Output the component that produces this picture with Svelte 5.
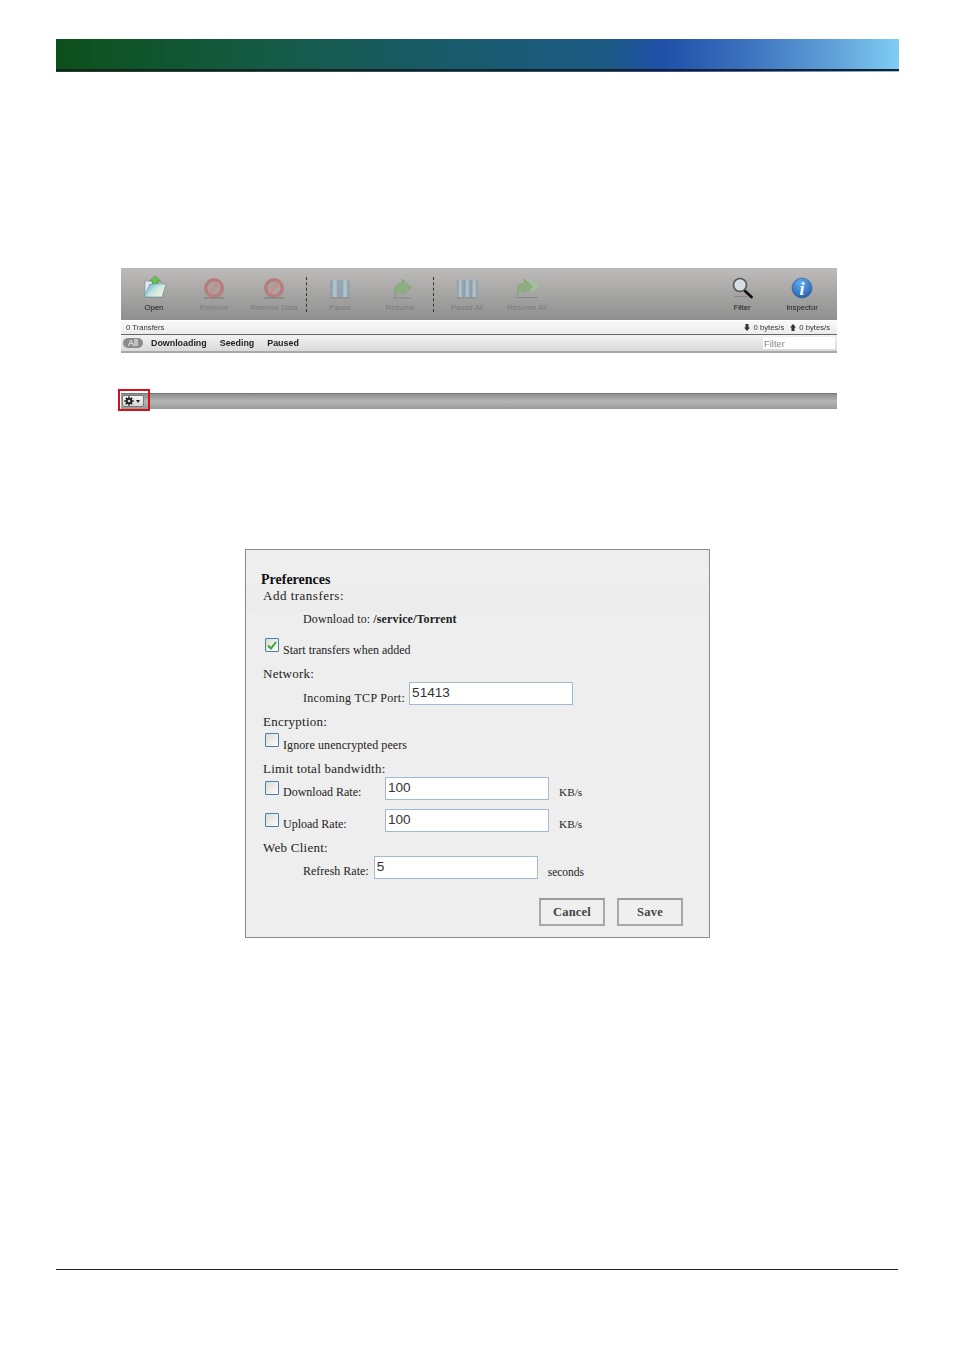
<script>
  const leftGroups = [
    [
      { label: 'Open', icon: 'open', on: true },
      { label: 'Remove', icon: 'remove' },
      { label: 'Remove Data', icon: 'remove' }
    ],
    [
      { label: 'Pause', icon: 'pause' },
      { label: 'Resume', icon: 'resume' }
    ],
    [
      { label: 'Pause All', icon: 'pauseall' },
      { label: 'Resume All', icon: 'resumeall' }
    ]
  ];
  const rightTools = [
    { label: 'Filter', icon: 'filter', on: true },
    { label: 'Inspector', icon: 'info', on: true }
  ];
</script>

{#snippet toolIcon(name)}
  <svg width="30" height="26" viewBox="0 0 30 26">
    <defs>
      <linearGradient id="fold" x1="0" y1="0" x2="1" y2="0.6">
        <stop offset="0" stop-color="#4aa3d8" />
        <stop offset="0.55" stop-color="#c4e4e0" />
        <stop offset="1" stop-color="#f4f6d6" />
      </linearGradient>
      <linearGradient id="bar" x1="0" y1="0" x2="1" y2="0">
        <stop offset="0" stop-color="#7f98aa" />
        <stop offset="0.5" stop-color="#b9c8cf" />
        <stop offset="1" stop-color="#8398a6" />
      </linearGradient>
      <radialGradient id="blue" cx="0.45" cy="0.25" r="0.85">
        <stop offset="0" stop-color="#66aeee" />
        <stop offset="1" stop-color="#1a58a6" />
      </radialGradient>
    </defs>
    {#if name === 'open'}
      <path d="M6 5h6l2 2h10v14H6z" fill="#e2e8ec" stroke="#7c8c96" stroke-width="0.6" />
      <path d="M16 0l5.500 5h-3v5h-5V5h-3z" fill="#63c44e" stroke="#3c8f34" stroke-width="0.5" />
      <path d="M11 8h16l-4 13H5z" fill="url(#fold)" stroke="#5f87a3" stroke-width="0.6" />
    {:else if name === 'remove'}
      <circle cx="15" cy="12" r="10" fill="#b97c7c" />
      <circle cx="15" cy="12" r="6.500" fill="#aca2a2" />
      <path d="M10 17l10-10" stroke="#c29292" stroke-width="3.400" />
      <rect x="5" y="21.500" width="20" height="1" fill="#777" />
    {:else if name === 'pause'}
      <rect x="5.500" y="4" width="8.700" height="17" fill="url(#bar)" />
      <rect x="15.700" y="4" width="8.700" height="17" fill="url(#bar)" />
      <rect x="5" y="21.500" width="20" height="1" fill="#888" />
    {:else if name === 'pauseall'}
      <rect x="5" y="4" width="6.500" height="17" fill="url(#bar)" />
      <rect x="12" y="4" width="6.500" height="17" fill="url(#bar)" />
      <rect x="19" y="4" width="6.500" height="17" fill="url(#bar)" />
      <rect x="5" y="21.500" width="20" height="1" fill="#888" />
    {:else if name === 'resume'}
      <path d="M17 3l9.500 8.500-9.500 7.500v-4c-4 0-6 2-7 6-2-8 1-14 7-14z" fill="#8dae80" stroke="#7b9c70" stroke-width="0.5" />
      <rect x="8" y="21.500" width="18" height="1" fill="#888" />
    {:else if name === 'resumeall'}
      <path d="M19 2l8 7.500-8 7.500v-4c-3 0-5 2-6 5-1-7 1-12 6-12z" fill="#a3c096" />
      <path d="M12 3l8.500 7.500-8.500 7.500v-4c-3.500 0-5.500 2-6.500 6-2-8 1-13 6.500-13z" fill="#8dae80" stroke="#7b9c70" stroke-width="0.5" />
      <rect x="4" y="21" width="22" height="1" fill="#888" />
    {:else if name === 'filter'}
      <rect x="7" y="20" width="14" height="1" fill="#888" />
      <path d="M18 15l6.500 6" stroke="#111" stroke-width="2.800" stroke-linecap="round" />
      <circle cx="13" cy="9" r="6.500" fill="#d3dfe5" stroke="#555" stroke-width="1.600" />
    {:else if name === 'info'}
      <circle cx="15" cy="12" r="10" fill="url(#blue)" stroke="#1c4f92" stroke-width="0.5" />
      <text class="info-i" x="15" y="18.500" text-anchor="middle">i</text>
    {/if}
  </svg>
{/snippet}

{#snippet toolButton(tool)}
  <div class="tool" class:on={tool.on}>
    <div class="tool-icon">{@render toolIcon(tool.icon)}</div>
    <span>{tool.label}</span>
  </div>
{/snippet}

<div class="page">
  <div class="banner"></div>

  <section class="webui">
    <div class="toolbar">
      {#each leftGroups as group, i}
        {#if i > 0}<div class="sep"></div>{/if}
        {#each group as tool}
          {@render toolButton(tool)}
        {/each}
      {/each}
      <div class="spring"></div>
      {#each rightTools as tool}
        {@render toolButton(tool)}
      {/each}
    </div>
    <div class="statusbar">
      <span>0 Transfers</span>
      <span class="speeds">
        <span class="speed"><svg width="6" height="7" viewBox="0 0 6 7"><path d="M1.500 0h3v3.500H6L3 7 0 3.500h1.500z" fill="#333" /></svg>0 bytes/s</span>
        <span class="speed"><svg width="6" height="7" viewBox="0 0 6 7"><path d="M1.500 7h3V3.500H6L3 0 0 3.500h1.500z" fill="#333" /></svg>0 bytes/s</span>
      </span>
    </div>
    <div class="filterbar">
      <span class="pill">All</span>
      <span class="filter-link">Downloading</span>
      <span class="filter-link">Seeding</span>
      <span class="filter-link">Paused</span>
      <div class="spring"></div>
      <div class="filter-input">Filter</div>
    </div>
  </section>

  <section class="bottombar">
    <div class="highlight">
      <div class="gear-btn">
        <svg width="10" height="10" viewBox="0 0 10 10">
          <circle cx="5" cy="5" r="2.300" fill="none" stroke="#222" stroke-width="1.900" />
          <path d="M5 .3v2M5 7.700v2M.3 5h2M7.700 5h2M1.700 1.700l1.400 1.400M6.900 6.900l1.400 1.400M8.300 1.700L6.900 3.100M3.100 6.900L1.700 8.300" stroke="#222" stroke-width="1.400" />
        </svg>
        <i class="caret"></i>
      </div>
    </div>
  </section>

  <section class="dialog">
    <div class="band">
      <h2>Preferences</h2>
      <div class="heading add">Add transfers:</div>
    </div>
    <div class="line indent dl">Download to: <b>/service/Torrent</b></div>
    <div class="line check start">
      <span class="box"><svg width="10" height="9" viewBox="0 0 10 9"><path d="M1 4.500l3 3 5-6.500" fill="none" stroke="#35a534" stroke-width="2" /></svg></span>
      <span>Start transfers when added</span>
    </div>
    <div class="heading network">Network:</div>
    <div class="line indent field port">
      <span>Incoming TCP Port:</span>
      <input value="51413" readonly />
    </div>
    <div class="heading encryption">Encryption:</div>
    <div class="line check ignore">
      <span class="box"></span>
      <span class="ignore-label">Ignore unencrypted peers</span>
    </div>
    <div class="heading limit">Limit total bandwidth:</div>
    <div class="line check rate first">
      <span class="box"></span>
      <span class="rate-label">Download Rate:</span>
      <input value="100" readonly />
      <span class="unit">KB/s</span>
    </div>
    <div class="line check rate">
      <span class="box"></span>
      <span class="rate-label">Upload Rate:</span>
      <input value="100" readonly />
      <span class="unit">KB/s</span>
    </div>
    <div class="heading web">Web Client:</div>
    <div class="line indent field refresh">
      <span class="refresh-label">Refresh Rate:</span>
      <input value="5" readonly />
      <span class="seconds">seconds</span>
    </div>
    <div class="actions">
      <div class="btn">Cancel</div>
      <div class="btn">Save</div>
    </div>
  </section>

  <div class="footer-rule"></div>
</div>

<style>
  :global(body) {
    background: #fff;
  }

  .page {
    width: 954px;
    height: 1352px;
    box-sizing: border-box;
    padding-top: 39px;
    overflow: hidden;
    font-family: "Liberation Sans", sans-serif;
    color: #222;
  }

  .banner {
    width: 843px;
    height: 33px;
    margin-left: 56px;
    background:
      linear-gradient(#1c2024, #1c2024) 0 30px / 100% 2px no-repeat,
      linear-gradient(90deg, #0b4f1a 0%, #0e5120 3%, #155b45 25%, #195a68 45%, #1c5a84 65%, #1f4fa8 72%, #3d72bf 82%, #5f9fd8 92%, #7fcdf4 100%);
  }

  .webui {
    width: 716px;
    margin: 196px 0 0 121px;
    filter: blur(0.3px);
  }

  .toolbar {
    height: 52px;
    padding: 0 5px 0 3px;
    display: flex;
    background: linear-gradient(#bdbcba, #8f8f8f);
  }

  .tool {
    width: 60px;
    display: flex;
    flex-direction: column;
    align-items: center;
    padding-top: 8px;
    font-size: 7.700px;
    line-height: 9px;
    color: #7c7c7c;
  }

  .tool.on {
    color: #1c1c1c;
  }

  .tool-icon {
    height: 26px;
    margin-bottom: 1px;
  }

  .info-i {
    font: italic bold 18px "Liberation Serif", serif;
    fill: #fff;
  }

  .sep {
    width: 0;
    height: 35px;
    margin: 9px 3px 0 3px;
    border-left: 1px dashed #333;
  }

  .sep:nth-child(4) {
    margin-left: 2px;
  }

  .spring {
    flex: 1;
  }

  .statusbar {
    height: 13px;
    margin-top: 1px;
    padding: 0 7px 0 5px;
    display: flex;
    justify-content: space-between;
    align-items: center;
    font-size: 7.700px;
    color: #333;
    background: linear-gradient(#f8f8f8, #ececec);
    border-bottom: 1px solid #666;
  }

  .speeds {
    display: flex;
    gap: 6px;
  }

  .speed {
    display: flex;
    align-items: center;
    gap: 3px;
  }

  .filterbar {
    height: 16px;
    padding: 0 2px;
    display: flex;
    align-items: center;
    font-size: 8.900px;
    font-weight: bold;
    color: #222;
    background: linear-gradient(#f2f2f2, #d9d9d9);
    border-bottom: 2px solid #a8a8a8;
  }

  .pill {
    width: 20px;
    height: 10px;
    line-height: 10px;
    margin-right: 8px;
    text-align: center;
    color: #fff;
    font-weight: normal;
    border-radius: 5px;
    background: #8b8b8b;
  }

  .filter-link {
    margin-right: 13px;
  }

  .filter-input {
    width: 71px;
    height: 12px;
    padding-left: 1px;
    line-height: 13px;
    font-weight: normal;
    font-size: 9.400px;
    color: #8a7f8a;
    background: #fff;
  }

  .bottombar {
    width: 716px;
    height: 16px;
    margin: 40px 0 0 121px;
    background: linear-gradient(#8f8f8f, #b5b5b5 50%, #999);
    border-top: 1px solid #777;
    box-sizing: border-box;
    position: relative;
  }

  .highlight {
    position: absolute;
    left: -3px;
    top: -5px;
    width: 32px;
    height: 22px;
    box-sizing: border-box;
    border: 2px solid #d4121a;
    padding: 4px 0 0 2px;
  }

  .gear-btn {
    width: 22px;
    height: 12px;
    padding-left: 1px;
    display: flex;
    align-items: center;
    gap: 2px;
    box-sizing: border-box;
    border: 1px solid #777;
    border-radius: 2px;
    background: linear-gradient(#f5f5f5, #d6d6d6);
  }

  .caret {
    width: 0;
    height: 0;
    border: 2.500px solid transparent;
    border-top: 3px solid #222;
    border-bottom: 0;
  }

  .dialog {
    width: 465px;
    height: 389px;
    margin: 140px 0 0 245px;
    box-sizing: border-box;
    border: 1px solid #8a8a8a;
    background: #eeeeee;
    font-family: "Liberation Serif", serif;
    font-size: 12px;
    color: #222;
    padding-left: 17px;
  }

  .band {
    margin: 16px 0 0 -17px;
    padding-left: 15px;
    height: 46px;
    box-sizing: border-box;
    background: linear-gradient(#efefef, #ececec);
    border-top: 1px solid #ebebeb;
  }

  h2 {
    margin: 5px 0 0;
    font-size: 14px;
    line-height: 15px;
    font-weight: bold;
    color: #111;
  }

  .heading {
    font-size: 13px;
    line-height: 15px;
    letter-spacing: 0.250px;
  }

  .add {
    margin-left: 2px;
    letter-spacing: 0.500px;
    margin-top: 1px;
  }

  .line {
    display: flex;
    align-items: flex-end;
    line-height: 14px;
    white-space: pre;
  }

  .indent {
    padding-left: 40px;
    display: block;
  }

  .dl {
    letter-spacing: 0.130px;
  }

  .check {
    padding-left: 2px;
  }

  .box {
    width: 12px;
    height: 12px;
    margin-right: 4px;
    margin-bottom: 5px;
    flex: none;
    display: flex;
    align-items: center;
    justify-content: center;
    border: 1px solid #4f7ea6;
    border-radius: 1px;
    background: linear-gradient(135deg, #ddddd6, #fbfbfb);
  }

  .start {
    margin-top: 12px;
  }

  .network {
    margin-top: 9px;
  }

  .field {
    display: flex;
    align-items: flex-end;
  }

  input {
    display: block;
    box-sizing: border-box;
    width: 164px;
    height: 23px;
    padding: 0 2px 3px;
    border: 1px solid #a3b9d0;
    background: #fff;
    font: 13.600px "Liberation Sans", sans-serif;
    color: #333;
    outline: none;
  }

  .port {
    margin-top: 1px;
    gap: 4px;
    letter-spacing: 0.300px;
  }

  .port input {
    letter-spacing: normal;
  }

  .encryption {
    margin-top: 9px;
  }

  .ignore {
    margin-top: 4px;
  }

  .ignore-label {
    letter-spacing: 0.090px;
  }

  .limit {
    margin-top: 9px;
  }

  .rate {
    height: 23px;
    margin-top: 9px;
  }

  .rate.first {
    margin-top: 1px;
  }

  .rate-label {
    width: 102px;
    flex: none;
    margin-bottom: 1px;
  }

  .unit {
    margin-left: 10px;
    margin-bottom: 1px;
    font-size: 11.300px;
  }

  .web {
    margin-top: 8px;
  }

  .refresh {
    margin-top: 1px;
    gap: 5px;
  }

  .refresh-label {
    margin-bottom: 1px;
  }

  .seconds {
    margin-left: 5px;
    font-size: 11.500px;
  }

  .actions {
    margin-top: 19px;
    padding-right: 26px;
    display: flex;
    justify-content: flex-end;
    gap: 12px;
  }

  .btn {
    width: 66px;
    height: 28px;
    box-sizing: border-box;
    border: 2px solid #a8a8a8;
    border-top-color: #9a9a9a;
    background: #efefef;
    text-align: center;
    line-height: 24px;
    font-size: 12.500px;
    letter-spacing: 0.200px;
    font-weight: bold;
    color: #444;
  }

  .footer-rule {
    width: 842px;
    height: 1px;
    margin: 331px 0 0 56px;
    background: #222;
  }
</style>
